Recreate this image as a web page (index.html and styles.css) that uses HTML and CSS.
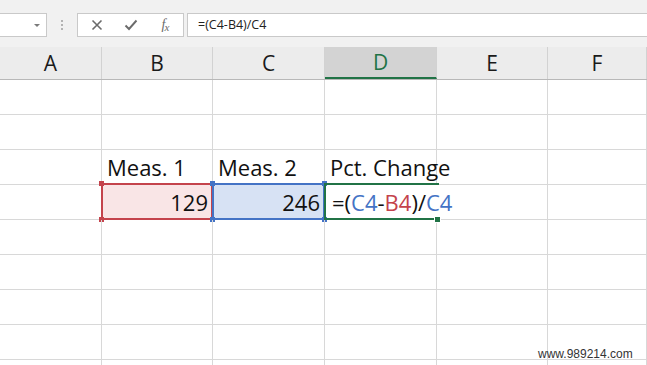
FILE: index.html
```html
<!DOCTYPE html>
<html lang="en">
<head>
  <meta charset="UTF-8">
  <title>Percent Change</title>
  <link rel="stylesheet" href="styles.css">
</head>
<body>

  <div class="sheet">
    <div class="formula-bar">
      <div class="name-box"><span class="caret"></span></div>
      <div class="grip"><i></i><i></i><i></i></div>
      <div class="fn-buttons">
        <span class="fn-btn">
          <svg width="12" height="12" viewBox="0 0 12 12"><path d="M1.5 1.5 L10.5 10.5 M10.5 1.5 L1.5 10.5" stroke="#6b6b6b" stroke-width="1.6" fill="none"/></svg>
        </span>
        <span class="fn-btn">
          <svg width="14" height="12" viewBox="0 0 14 12"><path d="M1.5 6.5 L5 10 L12.5 1.5" stroke="#6b6b6b" stroke-width="1.9" fill="none"/></svg>
        </span>
        <span class="fn-btn fx"><i>f</i><i class="x">x</i></span>
      </div>
      <div class="formula-input">=(C4-B4)/C4</div>
    </div>

    <div class="col-headers">
      <div class="col-head">A</div>
      <div class="col-head">B</div>
      <div class="col-head">C</div>
      <div class="col-head active">D</div>
      <div class="col-head">E</div>
      <div class="col-head">F</div>
    </div>

    <div class="grid">
      <!-- row 1 -->
      <div class="cell"></div><div class="cell"></div><div class="cell"></div><div class="cell"></div><div class="cell"></div><div class="cell"></div>
      <!-- row 2 -->
      <div class="cell"></div><div class="cell"></div><div class="cell"></div><div class="cell"></div><div class="cell"></div><div class="cell"></div>
      <!-- row 3 -->
      <div class="cell"></div>
      <div class="cell">Meas. 1</div>
      <div class="cell">Meas. 2</div>
      <div class="cell">Pct. Change</div>
      <div class="cell"></div><div class="cell"></div>
      <!-- row 4 -->
      <div class="cell"></div>
      <div class="cell num ref-red">129
        <span class="range"><span class="handle tl"></span><span class="handle bl"></span></span>
      </div>
      <div class="cell num ref-blue">246
        <span class="range"><span class="handle tl"></span><span class="handle bl"></span><span class="handle tr"></span><span class="handle br"></span></span>
      </div>
      <div class="cell editing">
        <span class="editor">=(<span class="t-blue">C4</span>-<span class="t-red">B4</span>)/<span class="t-blue">C4</span></span>
        <span class="fill-handle"></span>
      </div>
      <div class="cell"></div><div class="cell"></div>
      <!-- rows 5-9 -->
      <div class="cell"></div><div class="cell"></div><div class="cell"></div><div class="cell"></div><div class="cell"></div><div class="cell"></div>
      <div class="cell"></div><div class="cell"></div><div class="cell"></div><div class="cell"></div><div class="cell"></div><div class="cell"></div>
      <div class="cell"></div><div class="cell"></div><div class="cell"></div><div class="cell"></div><div class="cell"></div><div class="cell"></div>
      <div class="cell"></div><div class="cell"></div><div class="cell"></div><div class="cell"></div><div class="cell"></div><div class="cell"></div>
      <div class="cell"></div><div class="cell"></div><div class="cell"></div><div class="cell"></div><div class="cell"></div><div class="cell"></div>
    </div>

    <div class="watermark">www.989214.com</div>
  </div>

</body>
</html>
```

FILE: styles.css
```css
body {
  margin: 0;
  background-color: #ffffff;
  font-family: 'Open Sans', 'Noto Sans', sans-serif;
  color: #111111;
}
.sheet {
  position: relative;
  width: 647px;
  height: 365px;
  overflow: hidden;
}

/* formula bar */
.formula-bar {
  display: flex;
  height: 24px;
  padding: 13px 0 10px 0;
  background-color: #f1f1f1;
  border-top: 1px solid #e2e2e2;
  margin-top: -1px;
}
.name-box {
  position: relative;
  width: 46px;
  background-color: #ffffff;
  border: 1px solid #c9c9c9;
  border-left: none;
}
.caret {
  position: absolute;
  right: 6px;
  top: 10px;
  border-left: 3px solid transparent;
  border-right: 3px solid transparent;
  border-top: 3px solid #7a7a7a;
}
.grip {
  width: 30px;
  display: flex;
  flex-direction: column;
  align-items: center;
  justify-content: center;
  gap: 2px;
}
.grip i {
  width: 2px;
  height: 2px;
  background-color: #b3b3b3;
}
.fn-buttons {
  display: flex;
  align-items: center;
  width: 103px;
  padding-left: 2px;
  margin-right: 3px;
  background-color: #ffffff;
  border: 1px solid #c9c9c9;
}
.fn-btn {
  width: 34px;
  display: flex;
  justify-content: center;
  align-items: center;
}
.fx {
  font-family: 'Liberation Serif', serif;
  font-size: 14px;
  color: #6b6b6b;
  letter-spacing: -1px;
}
.fx .x {
  font-size: 11px;
  margin-top: 3px;
}
.formula-input {
  flex: 1;
  background-color: #ffffff;
  border: 1px solid #c9c9c9;
  border-right: none;
  padding-left: 10px;
  font-size: 12.5px;
  line-height: 22px;
  color: #222222;
}

/* column headers */
.col-headers {
  display: grid;
  grid-template-columns: 102px 111px 112px 112px 111px 1fr;
  height: 32px;
  border-bottom: 1px solid #b8b8b8;
  background-color: #ececec;
}
.col-head {
  border-right: 1px solid #d2d2d2;
  text-align: center;
  font-size: 21px;
  line-height: 32px;
  color: #1a1a1a;
}
.col-head.active {
  background-color: #d3d3d3;
  color: #217346;
  border-bottom: 2px solid #217346;
  line-height: 30px;
}

/* cells */
.grid {
  display: grid;
  grid-template-columns: 102px 111px 112px 112px 111px 1fr;
  grid-auto-rows: 35px;
}
.cell {
  position: relative;
  border-right: 1px solid #d8d8d8;
  border-bottom: 1px solid #d8d8d8;
  padding: 0 5px;
  font-size: 22px;
  line-height: 34px;
  white-space: nowrap;
}
.num {
  text-align: right;
  padding-right: 4px;
}
.ref-red {
  background-color: #f9e5e6;
}
.ref-blue {
  background-color: #d7e2f4;
}
.range {
  position: absolute;
  top: -2px;
  left: -1px;
  right: -1px;
  bottom: -1px;
  border: 2px solid;
}
.ref-red .range {
  border-color: #c4434c;
}
.ref-blue .range {
  border-color: #4473c5;
}
.handle {
  position: absolute;
  width: 5px;
  height: 5px;
}
.ref-red .handle {
  background-color: #c4434c;
}
.ref-blue .handle {
  background-color: #4473c5;
}
.handle.tl { top: -4px; left: -4px; }
.handle.bl { bottom: -4px; left: -4px; }
.handle.tr { top: -4px; right: -4px; }
.handle.br { bottom: -4px; right: -4px; }

.editing {
  border-right: none;
  overflow: visible;
  z-index: 2;
}
.editing::before {
  content: "";
  position: absolute;
  top: -2px;
  left: -1px;
  right: -2px;
  bottom: -1px;
  border-top: 2px solid #217346;
  border-bottom: 2px solid #217346;
  border-left: 2px solid #217346;
}
.editor {
  position: relative;
  background-color: #ffffff;
  padding-left: 2px;
  padding-right: 2px;
}
.t-blue {
  color: #4473c5;
}
.t-red {
  color: #c4434c;
}
.fill-handle {
  position: absolute;
  right: -4px;
  bottom: -4px;
  width: 5px;
  height: 5px;
  background-color: #217346;
  border: 1px solid #ffffff;
}

.watermark {
  position: absolute;
  left: 538px;
  top: 347px;
  font-family: 'Liberation Sans', Arial, sans-serif;
  font-size: 12px;
  color: #333333;
}
```
